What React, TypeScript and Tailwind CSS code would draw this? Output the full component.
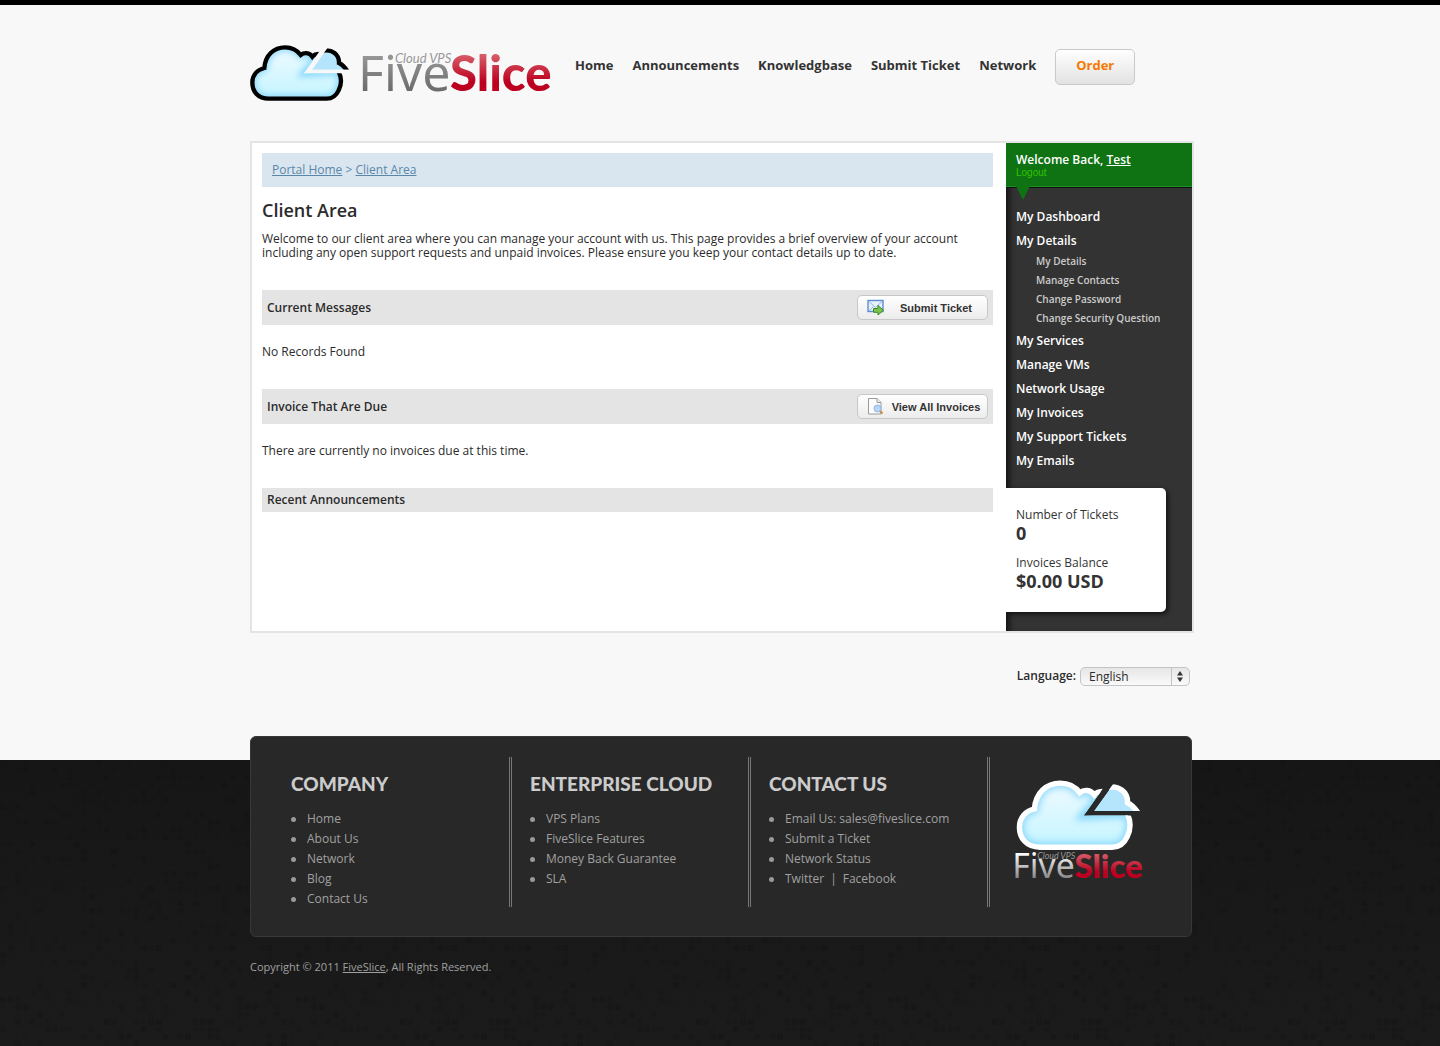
import React from "react";

function CloudLogo({ id, outline }: { id: string; outline: string }) {
  const body =
    "M296 110 C306 130 304 150 296 166 C289 181 276 191 260 191 L86 191 C54 191 37 169 37 143 C37 120 52 104 73 99 C76 60 102 37 135 37 C156 37 172 46 182 60 C192 52 208 52 217 65 C222 59 230 57 240 57";
  const piece = "M250 47 C276 42 298 58 297 84 C306 88 314 96 322 108";
  return (
    <g>
      <defs>
        <clipPath id={id + "-cut"}>
          <path d="M0 0 H273 L192 115 H400 V250 H0 Z" />
        </clipPath>
        <clipPath id={id + "-piece"}>
          <path d="M291 0 H400 V104 H215 Z" />
        </clipPath>
        <clipPath id={id + "-body"}>
          <path d={body + " L192 115 Z"} />
        </clipPath>
        <filter id={id + "-glow"} x="-20%" y="-20%" width="140%" height="140%">
          <feGaussianBlur stdDeviation="9" />
        </filter>
        <linearGradient id={id + "-sky"} x1="0" y1="0" x2="0" y2="1">
          <stop offset="0" stopColor="#effaff" />
          <stop offset="1" stopColor="#c4f5ff" />
        </linearGradient>
      </defs>
      <g clipPath={`url(#${id}-cut)`}>
        <path d={body + " L192 115 Z"} fill={`url(#${id}-sky)`} />
        <g clipPath={`url(#${id}-body)`}>
          <path d={body + " L192 115 Z"} fill="none" stroke="#8ad8fb" strokeWidth="22" filter={`url(#${id}-glow)`} />
        </g>
        <path d={body} fill="none" stroke={outline} strokeWidth="13" />
      </g>
      <g clipPath={`url(#${id}-piece)`}>
        <path d={piece + " L215 106 L262 40 Z"} fill="#b4e5fc" />
        <path d={piece} fill="none" stroke={outline} strokeWidth="13" />
      </g>
    </g>
  );
}

function WordMark({ id, from, to }: { id: string; from: string; to: string }) {
  return (
    <g>
      <defs>
        <linearGradient id={id + "-grey"} gradientUnits="userSpaceOnUse" x1="0" y1="-37" x2="0" y2="0">
          <stop offset="0" stopColor={from} />
          <stop offset="1" stopColor={to} />
        </linearGradient>
        <linearGradient id={id + "-red"} gradientUnits="userSpaceOnUse" x1="0" y1="-37" x2="0" y2="0">
          <stop offset="0" stopColor="#d8606a" />
          <stop offset="0.75" stopColor="#bd0020" />
          <stop offset="1" stopColor="#bd0020" />
        </linearGradient>
      </defs>
      <text x="-4" y="0" fontFamily="Noto Sans, sans-serif" fontSize="50" fill={`url(#${id}-grey)`}>
        Five
      </text>
      <text x="88" y="0" fontFamily="Lato, sans-serif" fontWeight="900" fontSize="49" fill={`url(#${id}-red)`}>
        Slice
      </text>
      <text x="33" y="-28" fontFamily="Lato, sans-serif" fontStyle="italic" fontSize="13" fill="#999">
        Cloud VPS
      </text>
    </g>
  );
}

const CELLS = 40;
const speckles: { x: number; y: number; o: number }[] = [];
let seed = 7;
for (let y = 0; y < CELLS; y++) {
  for (let x = 0; x < CELLS; x++) {
    seed = (seed * 16807) % 2147483647;
    const r = seed / 2147483647;
    if (r < 0.28) speckles.push({ x: x * 7.4, y: y * 7.4, o: 0.08 + r });
  }
}

function Texture() {
  return (
    <svg className="absolute inset-0 size-full" aria-hidden="true">
      <defs>
        <pattern id="speckles" width="296" height="296" patternUnits="userSpaceOnUse">
          {speckles.map((s) => (
            <rect key={s.x + "-" + s.y} x={s.x} y={s.y} width="6" height="6" fill="#101010" opacity={s.o} />
          ))}
        </pattern>
      </defs>
      <rect width="100%" height="100%" fill="url(#speckles)" />
    </svg>
  );
}

const nav = ["Home", "Announcements", "Knowledgbase", "Submit Ticket", "Network"];
const details = ["My Details", "Manage Contacts", "Change Password", "Change Security Question"];
const menu = ["My Services", "Manage VMs", "Network Usage", "My Invoices", "My Support Tickets", "My Emails"];
const columns = [
  { title: "COMPANY", items: [["Home"], ["About Us"], ["Network"], ["Blog"], ["Contact Us"]] },
  { title: "ENTERPRISE CLOUD", items: [["VPS Plans"], ["FiveSlice Features"], ["Money Back Guarantee"], ["SLA"]] },
  {
    title: "CONTACT US",
    items: [["Email Us: sales@fiveslice.com"], ["Submit a Ticket"], ["Network Status"], ["Twitter", "Facebook"]],
  },
];

function MailIcon() {
  return (
    <svg width="18" height="17" viewBox="0 0 18 17" aria-hidden="true">
      <rect x="1" y="1.500" width="15" height="11" fill="#e8f1fb" stroke="#5b8ed0" strokeWidth="1.4" />
      <path d="M2 2.500 L8.500 8.500 L15 2.500 M2 12 L6.500 7.500 M15 12 L10.500 7.500" fill="none" stroke="#8fb4e2" />
      <path d="M6.500 9.500 H11 V6.500 L16.500 11.300 L11 16 V13.300 H6.500 Z" fill="#7cc34e" stroke="#3f8a24" />
    </svg>
  );
}

function InvoiceIcon() {
  return (
    <svg width="18" height="17" viewBox="0 0 18 17" aria-hidden="true">
      <path d="M1.500 .5 H10 L14 4.500 V16 H1.500 Z" fill="#fcfcfc" stroke="#9a9a9a" />
      <path d="M10 .5 V4.500 H14" fill="#eee" stroke="#9a9a9a" />
      <path d="M12.500 12.500 L15.500 15.500" stroke="#c98a4b" strokeWidth="2.200" />
      <circle cx="10.500" cy="10.500" r="3.500" fill="#b5d6f5" stroke="#8db8e6" />
    </svg>
  );
}

function Section({ title, action, children }: { title: string; action?: React.ReactNode; children?: React.ReactNode }) {
  return (
    <section className="mb-[30px]">
      <div className="flex items-center justify-between bg-[#e4e4e4] p-[5px]">
        <h2 className="text-[12px] leading-[14px] font-semibold">{title}</h2>
        {action}
      </div>
      {children && <p className="mt-5 text-[12px] leading-[14px]">{children}</p>}
    </section>
  );
}

function ActionButton({ icon, label }: { icon: React.ReactNode; label: string }) {
  return (
    <button className="flex h-[25px] w-[131px] items-center rounded-[5px] border border-[#c8c8c8] bg-gradient-to-b from-white to-[#ececec] pl-[9px] font-['Liberation_Sans',sans-serif] text-[11px] font-bold text-[#333]">
      {icon}
      <span className="flex-1 text-center whitespace-nowrap">{label}</span>
    </button>
  );
}

export default function App() {
  return (
    <div className="flex min-h-screen flex-col border-t-[5px] border-black bg-[#f8f8f8] font-['Open_Sans',sans-serif] text-[12px] leading-[14px] text-[#2b2b2b]">
      <div className="mx-auto w-full max-w-[940px]">
        <header className="flex h-[136px] items-start pt-[39px]">
          <a href="#" aria-label="FiveSlice Cloud VPS">
            <svg className="overflow-visible" width="302" height="64" viewBox="0 0 302 64">
              <g transform="scale(.33333) translate(-30 -27)">
                <CloudLogo id="head" outline="#000" />
              </g>
              <g transform="translate(112 47)">
                <WordMark id="headword" from="#999" to="#6b6b6b" />
              </g>
            </svg>
          </a>
          <nav className="ml-[23px] flex items-start gap-[19px] pt-[5px] text-[13px] font-bold text-[#333]">
            {nav.map((n) => (
              <a key={n} href="#" className="leading-8 whitespace-nowrap">
                {n}
              </a>
            ))}
            <a
              href="#"
              className="h-9 w-20 rounded-[5px] border border-[#c9c9c9] bg-gradient-to-b from-white to-[#e2e2e2] text-center leading-[31px] text-[#f57900]"
            >
              Order
            </a>
          </nav>
        </header>

        <div className="-mr-1 flex border-2 border-[#e4e4e4] bg-white">
          <main className="flex-1 pt-[10px] pr-[13px] pl-[10px]">
            <div className="bg-[#dae6ef] p-[10px] text-[#5a86aa]">
              <a href="#" className="underline">
                Portal Home
              </a>{" "}
              &gt;{" "}
              <a href="#" className="underline">
                Client Area
              </a>
            </div>
            <h1 className="mt-3 text-[18px] leading-[22px] font-semibold">Client Area</h1>
            <p className="mt-[11px] mb-[30px]">
              Welcome to our client area where you can manage your account with us. This page provides a brief overview
              of your account including any open support requests and unpaid invoices. Please ensure you keep your
              contact details up to date.
            </p>
            <Section title="Current Messages" action={<ActionButton icon={<MailIcon />} label="Submit Ticket" />}>
              No Records Found
            </Section>
            <Section title="Invoice That Are Due" action={<ActionButton icon={<InvoiceIcon />} label="View All Invoices" />}>
              There are currently no invoices due at this time.
            </Section>
            <Section title="Recent Announcements" />
          </main>

          <aside className="flex w-[186px] shrink-0 flex-col overflow-hidden bg-[#333] font-semibold text-white shadow-[inset_8px_0_6px_-5px_#111]">
            <div className="relative h-11 border-b border-[#1c8f22] bg-[#0f7314] pt-[10px] pl-[10px] shadow-[0_1px_0_#111]">
              <p>
                Welcome Back,{" "}
                <a href="#" className="underline">
                  Test
                </a>
              </p>
              <a
                href="#"
                className="block font-['Liberation_Sans',sans-serif] text-[10px] leading-3 font-normal text-[#2fc400]"
              >
                Logout
              </a>
              <svg className="absolute top-[43px] left-[10px]" width="14" height="14" aria-hidden="true">
                <path d="M0 0 H14 L7 14 Z" fill="#0f7314" />
              </svg>
            </div>
            <ul className="pt-[18px] pl-[10px] leading-6">
              <li>
                <a href="#">My Dashboard</a>
              </li>
              <li>
                <a href="#">My Details</a>
                <ul className="-mt-[1px] mb-[1px] pl-5 text-[10px] leading-[19px] whitespace-nowrap text-[#ccc]">
                  {details.map((d) => (
                    <li key={d}>
                      <a href="#">{d}</a>
                    </li>
                  ))}
                </ul>
              </li>
              {menu.map((m) => (
                <li key={m}>
                  <a href="#">{m}</a>
                </li>
              ))}
            </ul>
            <div className="mt-[15px] mr-[26px] mb-[19px] rounded-r-[5px] bg-white py-5 pl-[10px] font-normal text-[#333] shadow-[2px_2px_5px_#111]">
              <p>Number of Tickets</p>
              <p className="text-[18px] leading-[22px] font-bold">0</p>
              <p className="mt-3">Invoices Balance</p>
              <p className="text-[18px] leading-[22px] font-bold">$0.00 USD</p>
            </div>
          </aside>
        </div>

        <div className="flex h-[127px] items-start justify-end gap-1 pt-[34px]">
          <label htmlFor="language" className="leading-[18px] font-semibold">
            Language:
          </label>
          <div className="relative">
            <select
              id="language"
              className="block h-[19px] w-[110px] appearance-none rounded-[5px] border border-[#c4c4c4] bg-gradient-to-b from-[#e6e6e6] to-[#fafafa] pl-2 text-[12px] leading-[17px]"
            >
              <option>English</option>
            </select>
            <svg
              className="pointer-events-none absolute top-px right-0"
              width="19"
              height="17"
              viewBox="0 0 19 17"
              aria-hidden="true"
            >
              <path d="M.5 0 V17" stroke="#c4c4c4" />
              <path d="M6 7.500 L9 3 L12 7.500 Z M6 9.500 L9 14 L12 9.500 Z" fill="#333" />
            </svg>
          </div>
        </div>
      </div>

      <footer className="relative flex-1 bg-gradient-to-b from-[#161616] to-[#1b1b1b] text-[#a0a0a0]">
        <Texture />
        <div className="relative mx-auto w-full max-w-[940px]">
          <div className="-mt-6 -mr-[2px] grid grid-cols-[239px_239px_239px_1fr] rounded-[6px] border border-[#383838] bg-[#282828] pt-5 pb-[29px] pl-[22px]">
            {columns.map((c) => (
              <div key={c.title} className="h-[150px] border-r-[3px] border-double border-[#777] pl-[18px]">
                <h3 className="mt-3 font-['Lato',sans-serif] text-[19px] leading-[30px] font-black whitespace-nowrap text-[#ccc]">
                  {c.title}
                </h3>
                <ul className="mt-[10px] leading-5">
                  {c.items.map((links) => (
                    <li key={links[0]} className="flex items-center whitespace-nowrap">
                      <span className="mr-[11px] size-[5px] rounded-full bg-[#999]" />
                      {links.map((l, i) => (
                        <React.Fragment key={l}>
                          {i > 0 && <span className="px-[6px]">|</span>}
                          <a href="#">{l}</a>
                        </React.Fragment>
                      ))}
                    </li>
                  ))}
                </ul>
              </div>
            ))}
            <a href="#" className="mt-[22px] ml-6" aria-label="FiveSlice Cloud VPS">
              <svg className="overflow-visible" width="130" height="110" viewBox="0 0 130 110">
                <g transform="translate(2.500 .8) scale(.416) translate(-30 -29)">
                  <CloudLogo id="foot" outline="#fff" />
                </g>
                <g transform="translate(1 99) scale(.675)">
                  <WordMark id="footword" from="#fff" to="#888" />
                </g>
              </svg>
            </a>
          </div>
          <p className="mt-[23px] text-[11px]">
            Copyright © 2011{" "}
            <a href="#" className="underline">
              FiveSlice
            </a>
            , All Rights Reserved.
          </p>
        </div>
      </footer>
    </div>
  );
}
